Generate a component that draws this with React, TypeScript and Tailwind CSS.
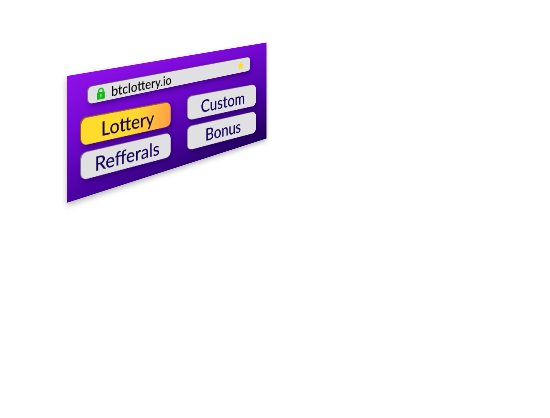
import { useState } from "react";

const tabs = ["Lottery", "Custom", "Refferals", "Bonus"];

function LockIcon() {
  return (
    <svg viewBox="0 0 14 20" className="h-5 w-[14px] shrink-0" aria-hidden="true">
      <path d="M3 9V6a4 4 0 0 1 8 0v3" fill="none" stroke="#12b816" strokeWidth="2.6" />
      <rect x="0" y="8" width="14" height="12" rx="1.5" fill="#12b816" />
      <path d="M7 11.5a1.6 1.6 0 0 1 .8 3V17H6.200v-2.500a1.600 1.600 0 0 1 .8-3z" fill="#9be09d" />
    </svg>
  );
}

function StarIcon() {
  return (
    <svg viewBox="0 0 20 20" className="h-5 w-5" aria-hidden="true">
      <path
        d="M10 1l2.700 5.900 6.300.7-4.700 4.300 1.300 6.400L10 15.100l-5.600 3.200 1.300-6.400L1 7.600l6.300-.7z"
        fill="#ffdb2b"
      />
    </svg>
  );
}

export default function App() {
  const [active, setActive] = useState("Lottery");
  const [address, setAddress] = useState("btclottery.io");

  return (
    <main className="min-h-screen overflow-hidden bg-white pt-[76px] pl-[67px] font-['Lato',sans-serif]">
      {/* The card is a flat panel turned away from the viewer on its right side. */}
      <section className="w-[440px] origin-top-left bg-[linear-gradient(168deg,#8f10e8_0%,#7408d2_32%,#4c02a2_66%,#1e0058_100%)] pt-6 pr-[30px] pb-6 pl-6 shadow-[0_4px_10px_rgba(0,0,0,0.3)] [transform:matrix3d(0.599,-0.1006,0,0.00073,0,0.6275,0,0,0,0,1,0,0,0,0,1)]">
        <div className="mr-4 ml-3 flex h-7 items-center rounded-lg bg-[#e0e0e2] px-4 shadow-[-2px_-1px_0_#77717f,3px_5px_10px_rgba(20,0,70,0.5)]">
          <LockIcon />
          <input
            aria-label="Address"
            value={address}
            onChange={(event) => setAddress(event.target.value)}
            className="ml-3 min-w-0 flex-1 bg-transparent text-[23px] leading-7 font-medium text-black outline-none"
          />
          <button type="button" aria-label="Bookmark">
            <StarIcon />
          </button>
        </div>

        <nav className="mt-[26px] grid skew-y-1 grid-cols-2 gap-x-[38px] gap-y-3">
          {tabs.map((tab) => (
            <button
              key={tab}
              type="button"
              onClick={() => setActive(tab)}
              className={
                tab === active
                  ? "h-11 skew-y-1 rounded-[10px] bg-[linear-gradient(100deg,#ffdc2b_0%,#ffd92e_55%,#ff9d48_100%)] text-[33px] leading-10 font-medium text-[#140458] shadow-[-2px_-2px_0_#96561a,3px_5px_10px_rgba(20,0,70,0.5)]"
                  : "h-11 skew-y-1 rounded-[10px] bg-[#e0e0e2] text-[33px] leading-10 font-medium text-[#140458] shadow-[-2px_-1px_0_#77717f,3px_5px_10px_rgba(20,0,70,0.5)]"
              }
            >
              {tab}
            </button>
          ))}
        </nav>
      </section>
    </main>
  );
}
